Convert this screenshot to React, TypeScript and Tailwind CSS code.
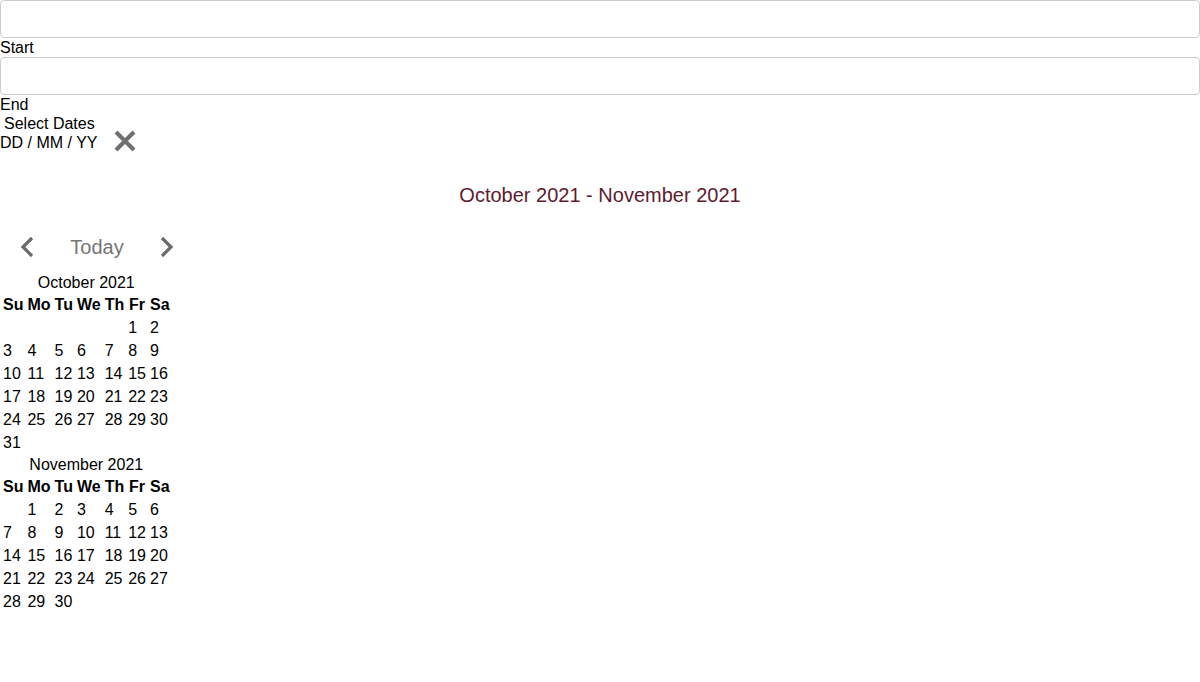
import React from "react";

const font = { fontFamily: '"Liberation Sans", Arial, sans-serif' };

type Month = { title: string; offset: number; days: number };

const months: Month[] = [
  { title: "October 2021", offset: 5, days: 31 },
  { title: "November 2021", offset: 1, days: 30 },
];

const weekDays = ["Su", "Mo", "Tu", "We", "Th", "Fr", "Sa"];

const buildRows = (m: Month): (number | null)[][] => {
  const cells: (number | null)[] = [];
  for (let i = 0; i < m.offset; i++) cells.push(null);
  for (let d = 1; d <= m.days; d++) cells.push(d);
  const rows: (number | null)[][] = [];
  for (let i = 0; i < cells.length; i += 7) rows.push(cells.slice(i, i + 7));
  return rows;
};

const Chevron = ({ dir }: { dir: "left" | "right" }) => (
  <svg width="16" height="22" viewBox="0 0 16 22">
    {dir === "left" ? (
      <polyline points="13,2 4,11 13,20" fill="none" stroke="#6b6b6b" strokeWidth="3.2" />
    ) : (
      <polyline points="3,2 12,11 3,20" fill="none" stroke="#6b6b6b" strokeWidth="3.2" />
    )}
  </svg>
);

const MonthTable = ({ month }: { month: Month }) => (
  <table className="border-separate border-spacing-[2px] text-black text-base">
    <caption className="leading-[18px]">{month.title}</caption>
    <thead>
      <tr>
        {weekDays.map((d) => (
          <th key={d} className="p-px font-bold leading-[19px]">
            {d}
          </th>
        ))}
      </tr>
    </thead>
    <tbody>
      {buildRows(month).map((row, i) => (
        <tr key={i}>
          {row.map((d, j) => (
            <td key={j} className="p-px text-left leading-[19px]">
              {d ?? ""}
            </td>
          ))}
        </tr>
      ))}
    </tbody>
  </table>
);

const App = () => {
  return (
    <div className="w-[1200px] min-h-[682px] bg-white text-black text-base" style={font}>
      <input className="block w-full h-[38px] border border-[#cccccc] rounded-[4px] outline-none" />
      <label className="block leading-[19px]">Start</label>
      <input className="block w-full h-[38px] border border-[#cccccc] rounded-[4px] outline-none" />
      <label className="block leading-[19px]">End</label>
      <div className="pl-1 leading-[19px]">Select Dates</div>
      <div className="flex items-center h-[19px]">
        <span className="leading-[19px]">DD / MM / YY</span>
        <button className="ml-[15px] -mt-[4px]">
          <svg width="24" height="24" viewBox="0 0 24 24">
            <path d="M3 3 L21 21 M21 3 L3 21" stroke="#707070" strokeWidth="4.2" />
          </svg>
        </button>
      </div>

      <div className="mt-[32px] text-center text-[20px] leading-[23px] text-[#5e1b2e]">
        October 2021 - November 2021
      </div>

      <div className="flex items-center gap-4 h-[40px] mt-[20px]">
        <button className="w-[54px] flex justify-center">
          <Chevron dir="left" />
        </button>
        <button className="w-[54px] text-center text-[20px] text-[#757575]">Today</button>
        <button className="w-[54px] flex justify-center">
          <Chevron dir="right" />
        </button>
      </div>

      <div className="mt-[7px] flex flex-col items-start gap-px">
        {months.map((m) => (
          <MonthTable key={m.title} month={m} />
        ))}
      </div>
    </div>
  );
};

export default App;
